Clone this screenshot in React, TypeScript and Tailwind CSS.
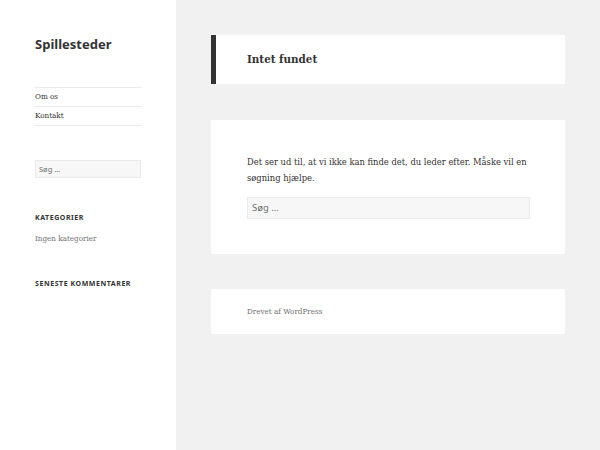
import React from 'react';

const serif = "font-['DejaVu_Serif_Condensed','DejaVu_Serif','Liberation_Serif',serif]";
const sans = "font-['Noto_Sans','Open_Sans',sans-serif]";

const App = () => {
    return (
        <div className="flex min-h-[450px] w-[600px] bg-[#f1f1f1] text-[#333]">
            {/* Sidebar */}
            <aside className="w-[176px] shrink-0 bg-white pl-[35px] pr-[35px] pt-[35px]">
                <h1 className={`${sans} text-[13px] font-bold leading-[18px] text-[#333]`}>Spillesteder</h1>

                <nav className={`${serif} mt-[34px] border-t border-[#eaeaea] text-[8px] text-[#333]`}>
                    <div className="border-b border-[#eaeaea] py-[4px] leading-[10px]">Om os</div>
                    <div className="border-b border-[#eaeaea] py-[4px] leading-[10px]">Kontakt</div>
                </nav>

                <div className={`${sans} mt-[34px] h-[18px] w-[106px] border border-[#eaeaea] bg-[#f7f7f7] pl-[3px] text-[7.5px] leading-[16px] text-[#707070]`}>
                    Søg …
                </div>

                <h2 className={`${sans} mt-[35px] text-[7px] font-bold uppercase tracking-[0.08em] leading-[10px] text-[#333]`}>Kategorier</h2>
                <p className={`${serif} mt-[11px] text-[8px] leading-[10px] text-[#707070]`}>Ingen kategorier</p>

                <h2 className={`${sans} mt-[35px] text-[7px] font-bold uppercase tracking-[0.08em] leading-[10px] text-[#333]`}>Seneste kommentarer</h2>
            </aside>

            {/* Main */}
            <main className="flex-1 px-[35px] pt-[35px]">
                <header className="flex h-[49px] items-center border-l-[5px] border-[#333] bg-white pl-[31px]">
                    <h1 className={`${serif} text-[11.5px] font-bold text-[#333]`}>Intet fundet</h1>
                </header>

                <section className="mt-[36px] h-[134px] bg-white pl-[36px] pr-[35px] pt-[34px]">
                    <p className={`${serif} text-[9.3px] leading-[16px] text-[#333]`}>
                        Det ser ud til, at vi ikke kan finde det, du leder efter. Måske vil en søgning hjælpe.
                    </p>
                    <div className={`${sans} mt-[11px] h-[22px] w-[283px] border border-[#eaeaea] bg-[#f7f7f7] pl-[4px] text-[9.5px] leading-[20px] text-[#707070]`}>
                        Søg …
                    </div>
                </section>

                <footer className="mt-[35px] flex h-[45px] items-center bg-white pl-[36px]">
                    <span className={`${serif} text-[8px] text-[#707070]`}>Drevet af WordPress</span>
                </footer>
            </main>
        </div>
    );
};

export default App;
